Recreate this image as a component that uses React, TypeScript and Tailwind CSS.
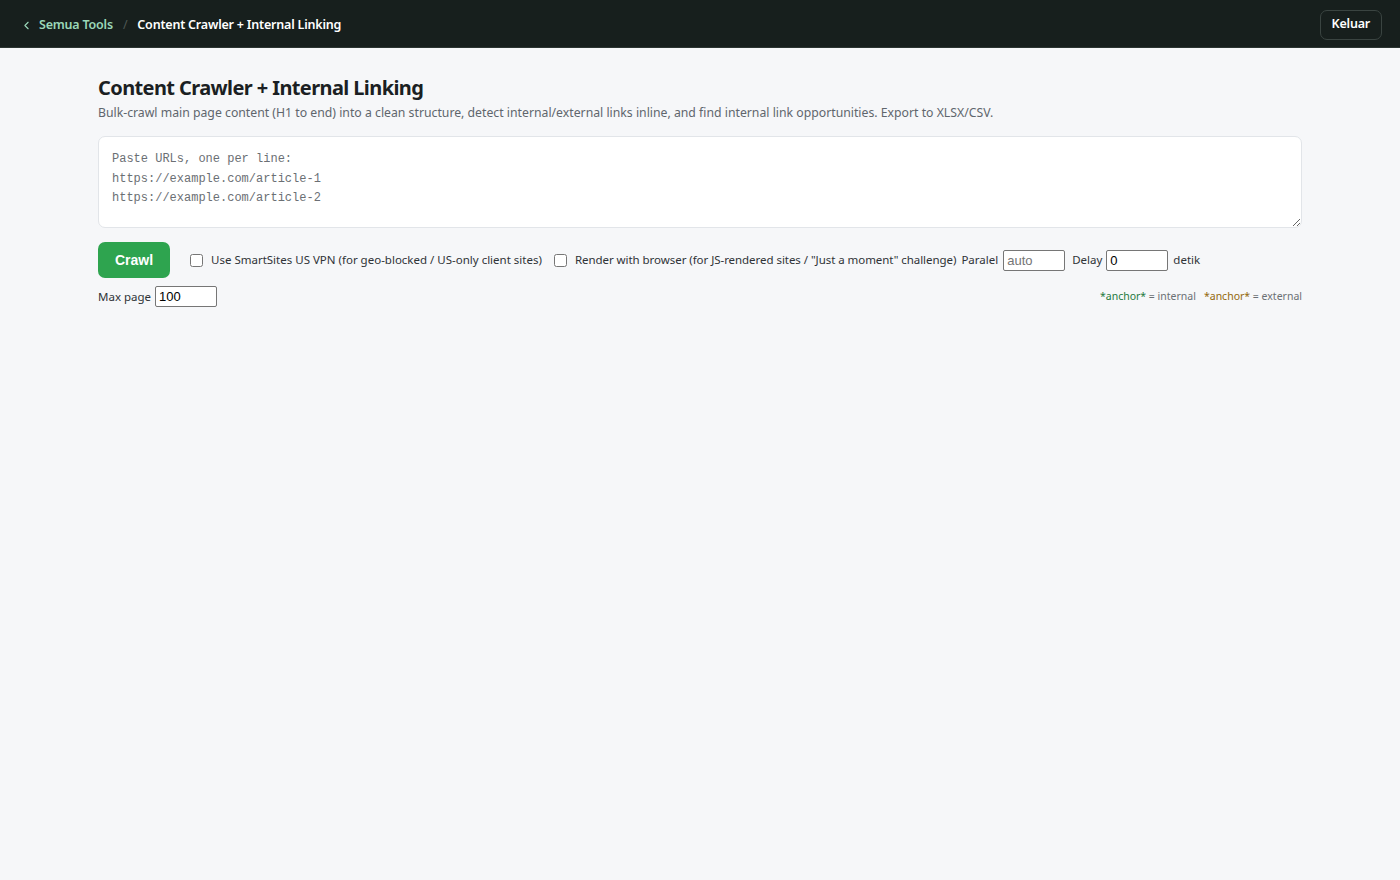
import { ChevronLeft } from "lucide-react";

const sans = "font-['Noto_Sans','Open_Sans',sans-serif]";

export default function App() {
  return (
    <div className={`min-h-[880px] bg-[#f6f7f9] ${sans}`}>
      <header className="flex h-12 items-center justify-between border-b border-[#2c3532] bg-[#171f1d] pl-[20px] pr-[18px] pt-[2px]">
        <nav className="flex items-center pt-[1px] text-[12.5px] font-semibold tracking-[-0.2px]">
          <a href="#" className="flex items-center gap-[6px] text-[#9ad7b8]">
            <ChevronLeft className="h-[13px] w-[13px] text-[#9ad7b8]" strokeWidth={2} />
            <span>Semua Tools</span>
          </a>
          <span className="mx-[10px] font-normal text-[#4e5754]">/</span>
          <span className="text-white">Content Crawler + Internal Linking</span>
        </nav>
        <button className="h-[30px] rounded-[7px] border border-[#3a4441] px-[11px] text-[12.5px] font-semibold tracking-[-0.2px] text-white">
          Keluar
        </button>
      </header>

      <main className="mx-auto w-[1204px] pt-[27px]">
        <h1 className="text-[20px] font-bold leading-[26px] tracking-[-0.6px] text-[#1b1f23]">
          Content Crawler + Internal Linking
        </h1>
        <p className="mt-[3px] text-[12.25px] leading-[18px] text-[#60666d]">
          Bulk-crawl main page content (H1 to end) into a clean structure, detect internal/external links inline, and find internal link opportunities. Export to XLSX/CSV.
        </p>

        <textarea
          className="mt-[14px] block h-[92px] w-full resize-y rounded-[7px] border border-[#e2e5e9] bg-white px-[13px] pb-[10px] pt-[13px] font-['Liberation_Mono','DejaVu_Sans_Mono',monospace] text-[12px] leading-[19.5px] text-[#333] placeholder:text-[#6b6f74]"
          placeholder={"Paste URLs, one per line:\nhttps://example.com/article-1\nhttps://example.com/article-2"}
        />

        <div className="mt-[14px] flex items-center text-[11.5px] text-[#2f3337]">
          <button className="h-[36px] w-[72px] rounded-[7px] bg-[#2ea44f] font-['Liberation_Sans',sans-serif] text-[14px] font-bold text-white">
            Crawl
          </button>
          <label className="ml-[20px] flex items-center gap-[8px]">
            <input type="checkbox" className="h-[13px] w-[13px]" />
            Use SmartSites US VPN (for geo-blocked / US-only client sites)
          </label>
          <label className="ml-[12px] flex items-center gap-[8px] tracking-[-0.05px]">
            <input type="checkbox" className="h-[13px] w-[13px]" />
            Render with browser (for JS-rendered sites / "Just a moment" challenge)
          </label>
          <span className="ml-[5px]">Paralel</span>
          <input
            className="ml-[5px] h-[21px] w-[62px] rounded-[2px] border border-[#767676] bg-white px-[3px] font-['Liberation_Sans',sans-serif] text-[13px] text-[#222] placeholder:text-[#757575]"
            placeholder="auto"
          />
          <span className="ml-[7px]">Delay</span>
          <input
            className="ml-[4px] h-[21px] w-[62px] rounded-[2px] border border-[#767676] bg-white px-[3px] font-['Liberation_Sans',sans-serif] text-[13px] text-black"
            defaultValue="0"
          />
          <span className="ml-[5px]">detik</span>
        </div>

        <div className="mt-[8px] flex items-center justify-between">
          <div className="flex items-center text-[11.5px] text-[#2f3337]">
            <span>Max page</span>
            <input
              className="ml-[4px] h-[21px] w-[62px] rounded-[2px] border border-[#767676] bg-white px-[3px] font-['Liberation_Sans',sans-serif] text-[13px] text-black"
              defaultValue="100"
            />
          </div>
          <div className="text-[10.5px] text-[#6b7075]">
            <span className="text-[#1f7a3e]">*anchor*</span> = internal
            <span className="ml-[8px] text-[#94690d]">*anchor*</span> = external
          </div>
        </div>
      </main>
    </div>
  );
}
